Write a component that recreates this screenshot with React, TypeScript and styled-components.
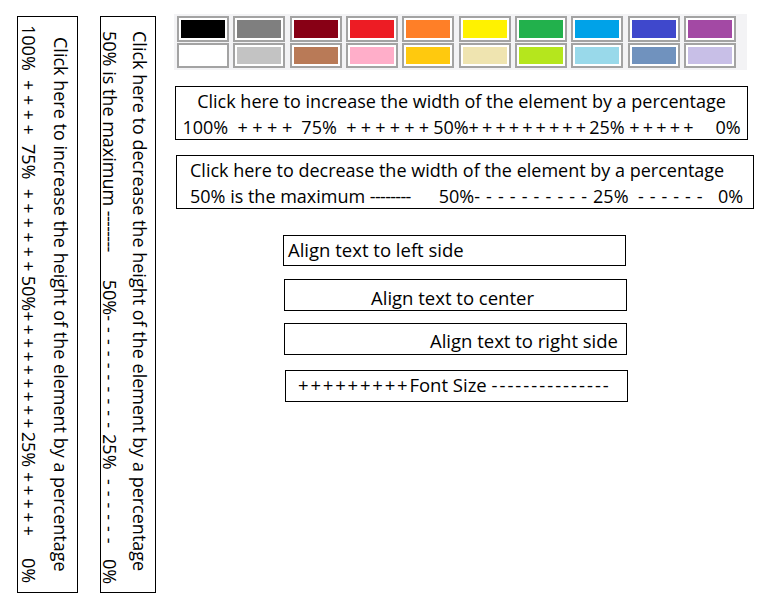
import React from "react";
import styled, { createGlobalStyle } from "styled-components";

const Global = createGlobalStyle`
  html, body { margin: 0; padding: 0; background: #ffffff; }
  body { font-family: "Open Sans", "Noto Sans", sans-serif; color: #000; }
`;

const Page = styled.div`
  display: flex;
  align-items: flex-start;
  box-sizing: border-box;
  width: 772px;
  height: 612px;
  padding: 14px 0 0 17px;
`;

const VBox = styled.div<{ $w: number; $lh: number; $align: "center" | "start"; $ml: number; $ps: number }>`
  writing-mode: vertical-rl;
  box-sizing: border-box;
  flex: none;
  width: ${(p) => p.$w}px;
  height: 577px;
  margin-top: 2px;
  margin-left: ${(p) => p.$ml}px;
  border: 1px solid #000;
  font-size: 18px;
  line-height: ${(p) => p.$lh}px;
  text-align: ${(p) => p.$align};
  padding-inline-start: ${(p) => p.$ps}px;
  white-space: pre;
`;

const Line = styled.div`
  display: block;
`;

const Run = styled.span<{ $ls: number }>`
  letter-spacing: ${(p) => p.$ls}px;
`;

const Column = styled.div`
  display: flex;
  flex-direction: column;
  align-items: flex-start;
  margin-left: 18px;
`;

const Palette = styled.div`
  display: grid;
  grid-template-columns: repeat(10, 52px);
  grid-auto-rows: 25.5px;
  column-gap: 4.33px;
  row-gap: 1px;
  box-sizing: border-box;
  width: 573px;
  padding: 2px 11px 2px 3px;
  background: #f3f3f5;
`;

const Swatch = styled.div<{ $c: string }>`
  box-sizing: border-box;
  border: 2px solid #a3a3a3;
  box-shadow: inset 0 0 0 2px #ffffff;
  background: ${(p) => p.$c};
`;

const WBox = styled.div<{ $w: number; $ml: number; $mt: number; $align: "center" | "left"; $pt: number; $pl: number }>`
  box-sizing: border-box;
  width: ${(p) => p.$w}px;
  height: 54px;
  margin: ${(p) => p.$mt}px 0 0 ${(p) => p.$ml}px;
  padding: ${(p) => p.$pt}px 0 0 ${(p) => p.$pl}px;
  border: 1px solid #000;
  font-size: 18px;
  line-height: 26px;
  text-align: ${(p) => p.$align};
  white-space: pre;
`;

const ABox = styled.div<{ $ml: number; $mt: number; $h: number; $align: "left" | "center" | "right"; $pt: number; $pl: number; $pr: number }>`
  box-sizing: border-box;
  width: 343px;
  height: ${(p) => p.$h}px;
  margin: ${(p) => p.$mt}px 0 0 ${(p) => p.$ml}px;
  padding: ${(p) => p.$pt}px ${(p) => p.$pr}px 0 ${(p) => p.$pl}px;
  border: 1px solid #000;
  font-size: 18.5px;
  line-height: 20px;
  text-align: ${(p) => p.$align};
  white-space: pre;
`;

const row1 = ["#000000", "#7f7f7f", "#880015", "#ed1c24", "#ff7f27", "#fff200", "#22b14c", "#00a2e8", "#3f48cc", "#a349a4"];
const row2 = ["#ffffff", "#c3c3c3", "#b97a57", "#ffaec9", "#ffc90e", "#efe4b0", "#b5e61d", "#99d9ea", "#7092be", "#c8bfe7"];

const IncreaseScale = () => (
  <Line>
    {"100%  "}
    <Run $ls={4.5}>++++</Run>
    {" 75%  "}
    <Run $ls={4.2}>++++++</Run>
    {"50%"}
    <Run $ls={3.1}>+++++++++</Run>
    {"25% "}
    <Run $ls={3.2}>+++++</Run>
    {"    0%"}
  </Line>
);

const DecreaseScale = () => (
  <Line>
    {"50% is the maximum "}
    <Run $ls={-0.7}>--------</Run>
    {"      50%"}
    <Run $ls={6.1}>----------</Run>
    {"25%  "}
    <Run $ls={6}>------</Run>
    {"  0%"}
  </Line>
);

export default function App() {
  return (
    <>
      <Global />
      <Page>
        <VBox $w={61} $lh={32} $align="center" $ml={0} $ps={0}>
          <Line>Click here to increase the height of the element by a percentage</Line>
          <IncreaseScale />
        </VBox>
        <VBox $w={56} $lh={30} $align="start" $ml={22} $ps={14}>
          <Line>Click here to decrease the height of the element by a percentage</Line>
          <DecreaseScale />
        </VBox>
        <Column>
          <Palette>
            {row1.map((c) => (
              <Swatch key={c} $c={c} />
            ))}
            {row2.map((c) => (
              <Swatch key={c} $c={c} />
            ))}
          </Palette>
          <WBox $w={573} $ml={1} $mt={16} $align="center" $pt={1} $pl={0}>
            <Line>Click here to increase the width of the element by a percentage</Line>
            <IncreaseScale />
          </WBox>
          <WBox $w={578} $ml={2} $mt={15} $align="left" $pt={1} $pl={13}>
            <Line>Click here to decrease the width of the element by a percentage</Line>
            <DecreaseScale />
          </WBox>
          <ABox $ml={109} $mt={26} $h={31} $align="left" $pt={4} $pl={4} $pr={0}>
            Align text to left side
          </ABox>
          <ABox $ml={110} $mt={13} $h={32} $align="center" $pt={8} $pl={0} $pr={6}>
            Align text to center
          </ABox>
          <ABox $ml={110} $mt={12} $h={32} $align="right" $pt={7} $pl={0} $pr={8}>
            Align text to right side
          </ABox>
          <ABox $ml={111} $mt={15} $h={32} $align="left" $pt={4} $pl={12} $pr={0}>
            <Run $ls={1.8}>+++++++++</Run>
            {"Font Size "}
            <Run $ls={2}>---------------</Run>
          </ABox>
        </Column>
      </Page>
    </>
  );
}
